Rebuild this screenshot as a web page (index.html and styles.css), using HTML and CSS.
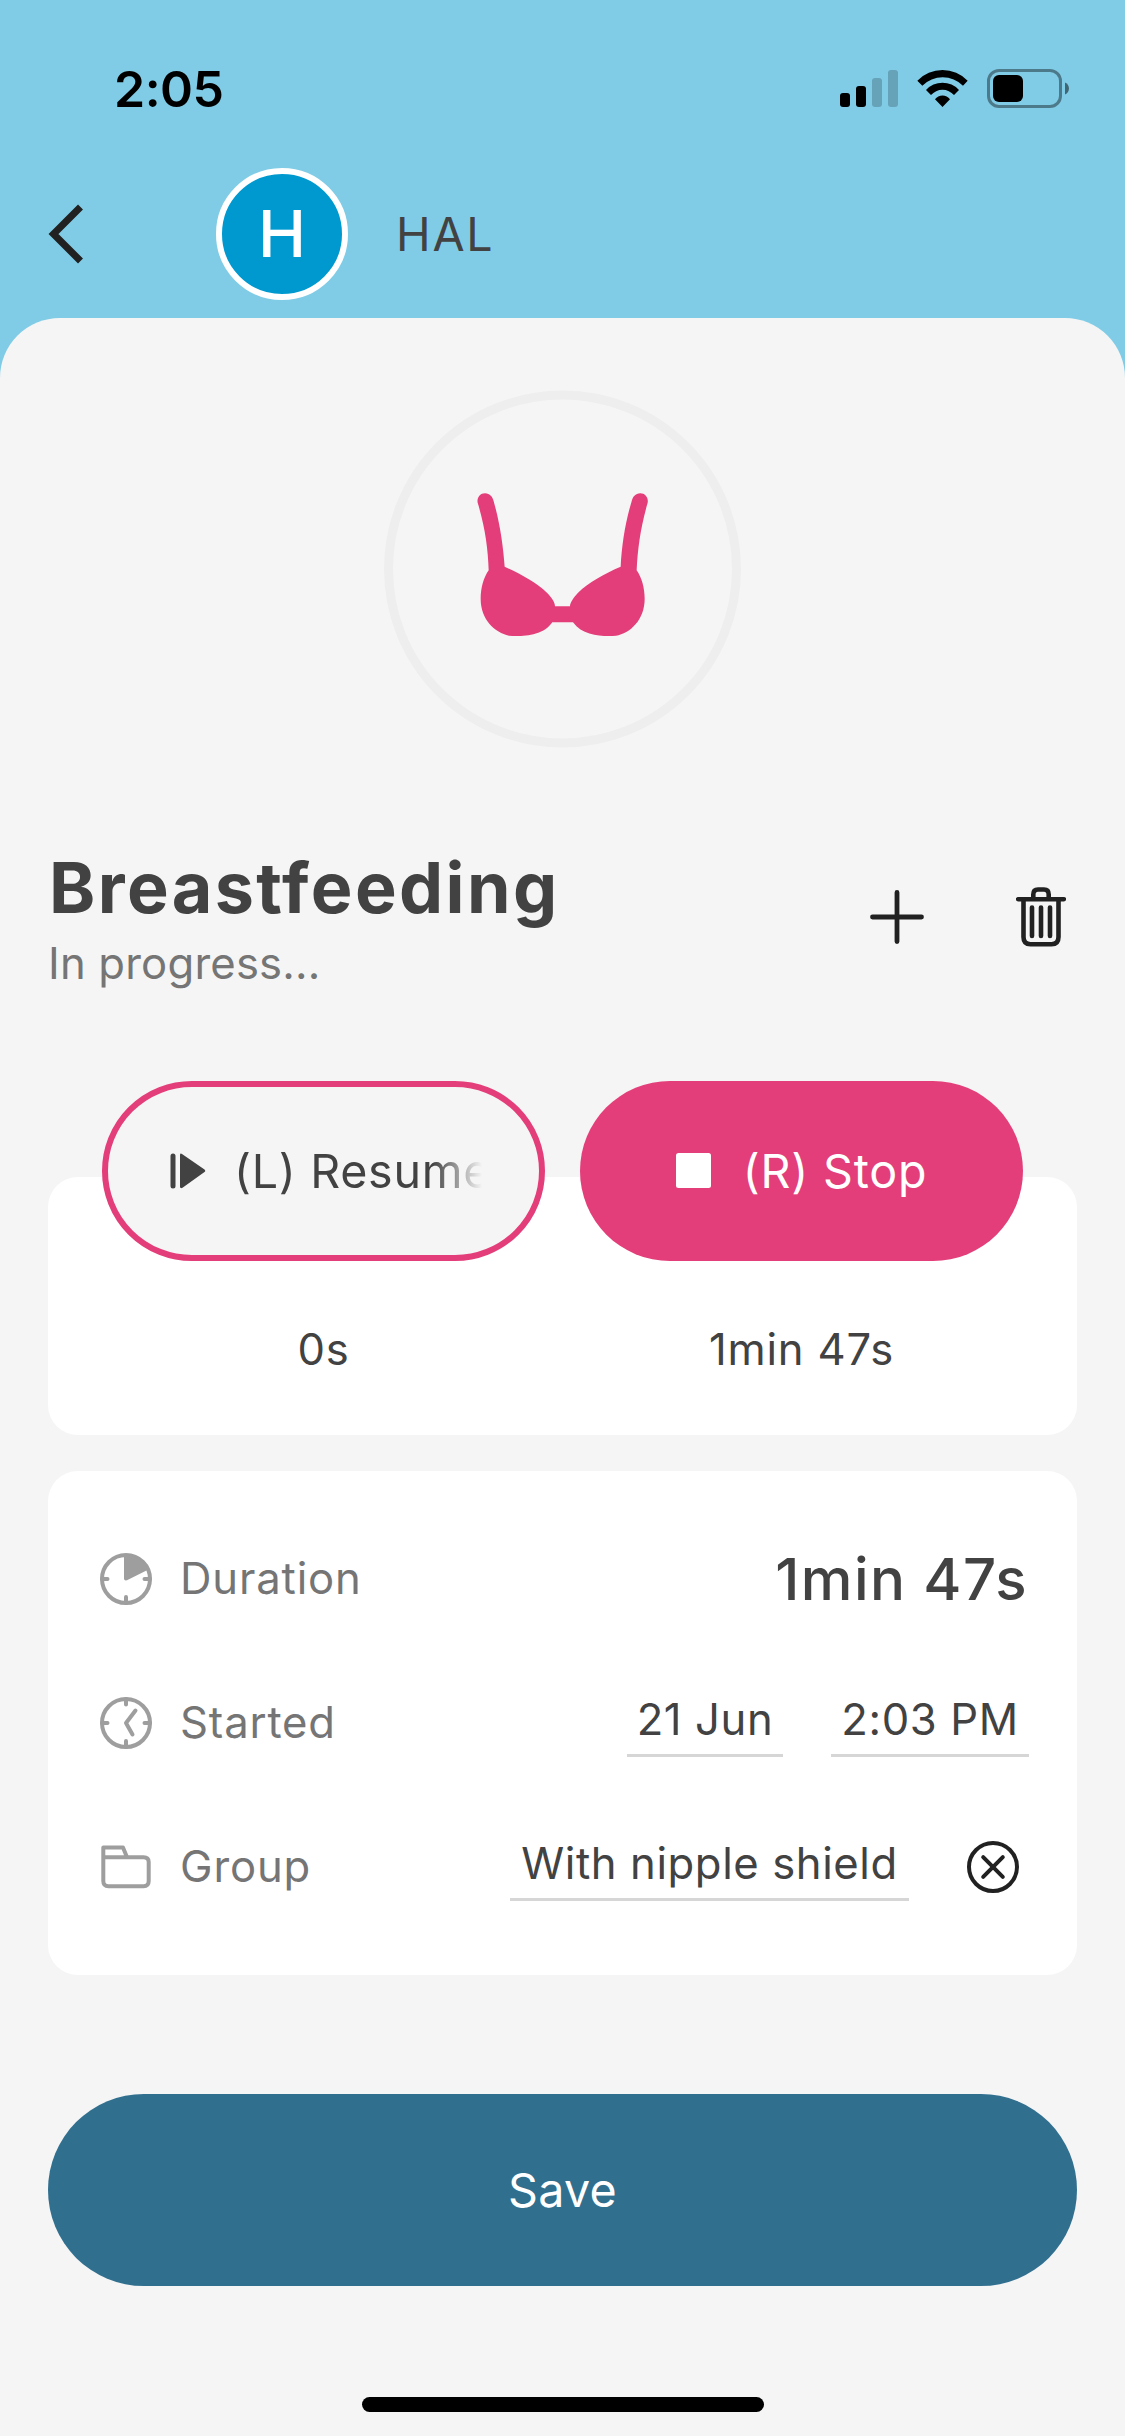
FILE: index.html
```html
<!DOCTYPE html>
<html lang="en">
<head>
<meta charset="utf-8">
<title>Breastfeeding</title>
<link rel="stylesheet" href="styles.css">
</head>
<body>
<div class="screen">
  <div class="status">
    <span class="clock">2:05</span>
    <div class="indicators">
      <svg width="58" height="40" viewBox="840 69 58 40">
        <rect x="840" y="93" width="10" height="14" rx="3"/>
        <rect x="856" y="86" width="10" height="21" rx="3"/>
        <rect x="872" y="78" width="10" height="29" rx="3" opacity=".2"/>
        <rect x="888" y="70" width="10" height="37" rx="3" opacity=".2"/>
      </svg>
      <svg width="51" height="40" viewBox="351 87 153 120">
        <path d="M352 122A105 105 0 0 1 503 122L489 137A87 87 0 0 0 367 137ZM378 150A67 67 0 0 1 477 150L462 165A46 46 0 0 0 393 165ZM405 178A28 28 0 0 1 450 178L427.500 201Z"/>
      </svg>
      <svg width="83" height="40" viewBox="987 69 83 40">
        <rect x="988.500" y="70.500" width="72" height="36" rx="10.500" fill="none" stroke="#000" stroke-opacity=".4" stroke-width="3"/>
        <rect x="993" y="75" width="30" height="27" rx="6"/>
        <path d="M1065 82.500C1070.300 84.500 1070.300 92.500 1065 94.500Z" opacity=".5"/>
      </svg>
    </div>
  </div>

  <div class="appbar">
    <svg class="back" width="36" height="60" viewBox="48 204 36 60"><path d="M80.500 207L53.500 234L80.500 261" fill="none" stroke="#212121" stroke-width="7"/></svg>
    <div class="avatar">H</div>
    <span class="name">HAL</span>
  </div>

  <div class="sheet">
    <svg class="emblem" width="357" height="358" viewBox="42 29.500 1071 1074">
      <circle cx="577.500" cy="566.500" r="522" fill="none" stroke="#eee" stroke-width="27"/>
      <path fill="#e33e79" d="M345 339C360 339 368 350 371 363C390 430 400 500 404 560C450 580 500 608 530 637C545 651 555 668 555 678L600 678C600 668 612 650 625 637C655 608 705 580 752 560C755 495 766 425 785 363C788 350 796 339 811 339C825 339 836 352 833 368C812 440 803 505 800 570C815 592 824 622 824 656C824 720 780 760 738 767C700 769 640 769 609 726L547 726C517 769 455 769 417 767C375 757 332 720 332 656C332 622 341 592 356 570C354 505 345 440 323 368C320 352 330 339 345 339Z"/>
    </svg>

    <div class="heading">
      <div class="titles">
        <h1>Breastfeeding</h1>
        <p>In progress...</p>
      </div>
      <div class="actions">
        <svg width="54" height="60" viewBox="870 887 54 60"><path d="M872.500 917H921.500M897 892.500V941.500" fill="none" stroke="#212121" stroke-width="4.800" stroke-linecap="round"/></svg>
        <svg width="50" height="60" viewBox="1016 887 50 60"><path d="M1018.200 899.200H1063.800M1023.500 900V937Q1023.500 944.200 1030.500 944.200H1051.500Q1058.500 944.200 1058.500 937V900M1033.300 898V894.500Q1033.300 889.500 1038 889.500H1044Q1048.700 889.500 1048.700 894.500V898M1032 907.500V936M1041 907.500V936M1050 907.500V936" fill="none" stroke="#212121" stroke-width="4.600" stroke-linecap="round"/></svg>
      </div>
    </div>

    <div class="sides">
      <div class="side">
        <div class="pill pill-outline">
          <svg width="36" height="36" viewBox="170.500 1153 36 36" fill="#424242"><rect x="171" y="1153.500" width="5" height="35" rx="2.500"/><path d="M180.500 1155Q180.700 1152.800 182.500 1154L205 1169.500Q206.500 1171 205 1172L183 1187.800Q180.500 1189 180.500 1186.500Z"/></svg>
          <span class="fade">(L) Resume</span>
        </div>
        <span class="elapsed">0s</span>
      </div>
      <div class="side">
        <div class="pill pill-solid">
          <svg width="35" height="35" viewBox="0 0 35 35"><rect width="35" height="35" rx="2.500" fill="#fff"/></svg>
          <span class="stop">(R) Stop</span>
        </div>
        <span class="elapsed">1min 47s</span>
      </div>
    </div>

    <div class="details">
      <div class="row">
        <svg width="52" height="52" viewBox="0 0 52 52"><circle cx="26" cy="26" r="24" fill="none" stroke="#9e9e9e" stroke-width="4"/><path d="M26 50V44M2 26H7.500M50 26H44.500" fill="none" stroke="#9e9e9e" stroke-width="4" stroke-linecap="round"/><path d="M24 3Q41 1.500 47.500 17L27 27.300Q24 28 24 25.500Z" fill="#9e9e9e"/></svg>
        <span class="label">Duration</span>
        <span class="total">1min 47s</span>
      </div>
      <div class="row">
        <svg width="52" height="52" viewBox="0 0 52 52" fill="none" stroke="#9e9e9e" stroke-width="4" stroke-linecap="round"><circle cx="26" cy="26" r="24"/><path d="M26 50V44M26 2V7.500M2 26H7.500M50 26H44.500M35.500 13.500L26 26L32.500 37.500" stroke-linejoin="round"/></svg>
        <span class="label">Started</span>
        <span class="field f-date">21 Jun</span>
        <span class="field f-time">2:03 PM</span>
      </div>
      <div class="row">
        <svg width="52" height="52" viewBox="100 1841 52 52" fill="none" stroke="#9e9e9e" stroke-width="4" stroke-linejoin="round"><path d="M103.300 1857.200V1847.400H123L127 1857.200M103.300 1857.200H143.500Q148.700 1857.200 148.700 1862V1881Q148.700 1886.200 143.500 1886.200H108.500Q103.300 1886.200 103.300 1881Z"/></svg>
        <span class="label">Group</span>
        <span class="field f-group">With nipple shield</span>
        <svg class="clear" width="52" height="52" viewBox="0 0 52 52" fill="none" stroke="#212121" stroke-width="4" stroke-linecap="round"><circle cx="26" cy="26" r="24"/><path d="M16.200 16.200L35.800 35.800M35.800 16.200L16.200 35.800"/></svg>
      </div>
    </div>

    <div class="save">Save</div>
    <div class="home"></div>
  </div>
</div>
</body>
</html>
```
FILE: styles.css
```css
* { box-sizing: border-box; }
body { margin: 0; font-family: Inter, "Liberation Sans", sans-serif; color: #424242; }
svg { display: block; flex: none; }
span, p, h1 { white-space: nowrap; }
.screen { width: 1125px; height: 2436px; background: #80cce6; display: flex; flex-direction: column; overflow: hidden; }

.status { height: 138px; padding: 69px 55px 0 114px; display: flex; justify-content: space-between; color: #000; }
.clock { font-size: 50px; line-height: 40px; font-weight: 600; letter-spacing: -.5px; }
.indicators { display: flex; }
.indicators svg + svg { margin-left: 19px; }

.appbar { height: 180px; padding: 30px 48px 18px; display: flex; align-items: center; }
.avatar { width: 132px; height: 132px; margin-left: 132px; border: 6px solid #fff; border-radius: 50%; background: #0099cf; color: #fff; font-size: 64.500px; line-height: 120px; font-weight: 500; text-align: center; }
.name { margin-left: 48px; font-size: 46.600px; line-height: 60px; letter-spacing: 1.800px; }

.sheet { height: 2118px; padding: 72px 48px 0; border-radius: 60px 60px 0 0; background: #f5f5f5; display: flex; flex-direction: column; }
.emblem { align-self: center; }

.heading { margin-top: 95px; height: 150px; display: flex; justify-content: space-between; }
.titles { padding-top: 5px; }
h1 { margin: 0 0 0 1px; font-size: 70px; line-height: 80px; font-weight: 700; letter-spacing: 2.400px; }
p { margin: 8px 0 0; font-size: 43.600px; line-height: 56px; letter-spacing: .2px; color: #757575; }
.actions { display: flex; gap: 92px; padding: 44px 11px 0 0; }

.sides { height: 258px; margin-top: 183.500px; padding: 0 54px; border-radius: 30px; background: #fff; display: flex; gap: 35px; }
.side { flex: 1; display: flex; flex-direction: column; align-items: center; }
.pill { width: 100%; height: 180px; margin-top: -96px; border-radius: 90px; display: flex; align-items: center; font-size: 46.600px; line-height: 60px; letter-spacing: .8px; }
.pill-outline { border: 6px solid #e33e79; background: #f5f5f5; padding-left: 62px; }
.pill-solid { background: #e33e79; color: #fff; justify-content: center; }
.fade { width: 248px; margin-left: 28px; overflow: hidden; letter-spacing: .7px; -webkit-mask-image: linear-gradient(90deg, #000 80%, transparent 100%); mask-image: linear-gradient(90deg, #000 80%, transparent 100%); }
.stop { margin-left: 32px; }
.elapsed { margin-top: 59px; font-size: 43.600px; line-height: 60px; letter-spacing: .8px; }

.details { height: 504px; margin-top: 36px; padding: 36px 48px; border-radius: 30px; background: #fff; }
.row { height: 144px; padding-left: 4px; display: flex; align-items: center; }
.label { margin-left: 28px; margin-right: auto; font-size: 43.600px; line-height: 60px; letter-spacing: .85px; color: #757575; }
.total { font-size: 58.200px; line-height: 72px; font-weight: 500; letter-spacing: 1.400px; padding-right: 1px; }
.field { height: 67px; margin-top: 2px; padding-bottom: 4px; border-bottom: 3px solid #d6d6d6; font-size: 43.600px; line-height: 60px; letter-spacing: .6px; text-align: center; }
.f-date { width: 156px; }
.f-time { width: 198px; margin-left: 48px; }
.f-group { width: 399px; }
.clear { margin-left: 58px; margin-right: 10px; }

.save { height: 192px; margin-top: 119.500px; border-radius: 96px; background: #316f8f; color: #fff; font-size: 46.600px; line-height: 192px; letter-spacing: .3px; text-align: center; }
.home { width: 402px; height: 15px; margin: 111px auto 0; border-radius: 8px; background: #000; }
```
